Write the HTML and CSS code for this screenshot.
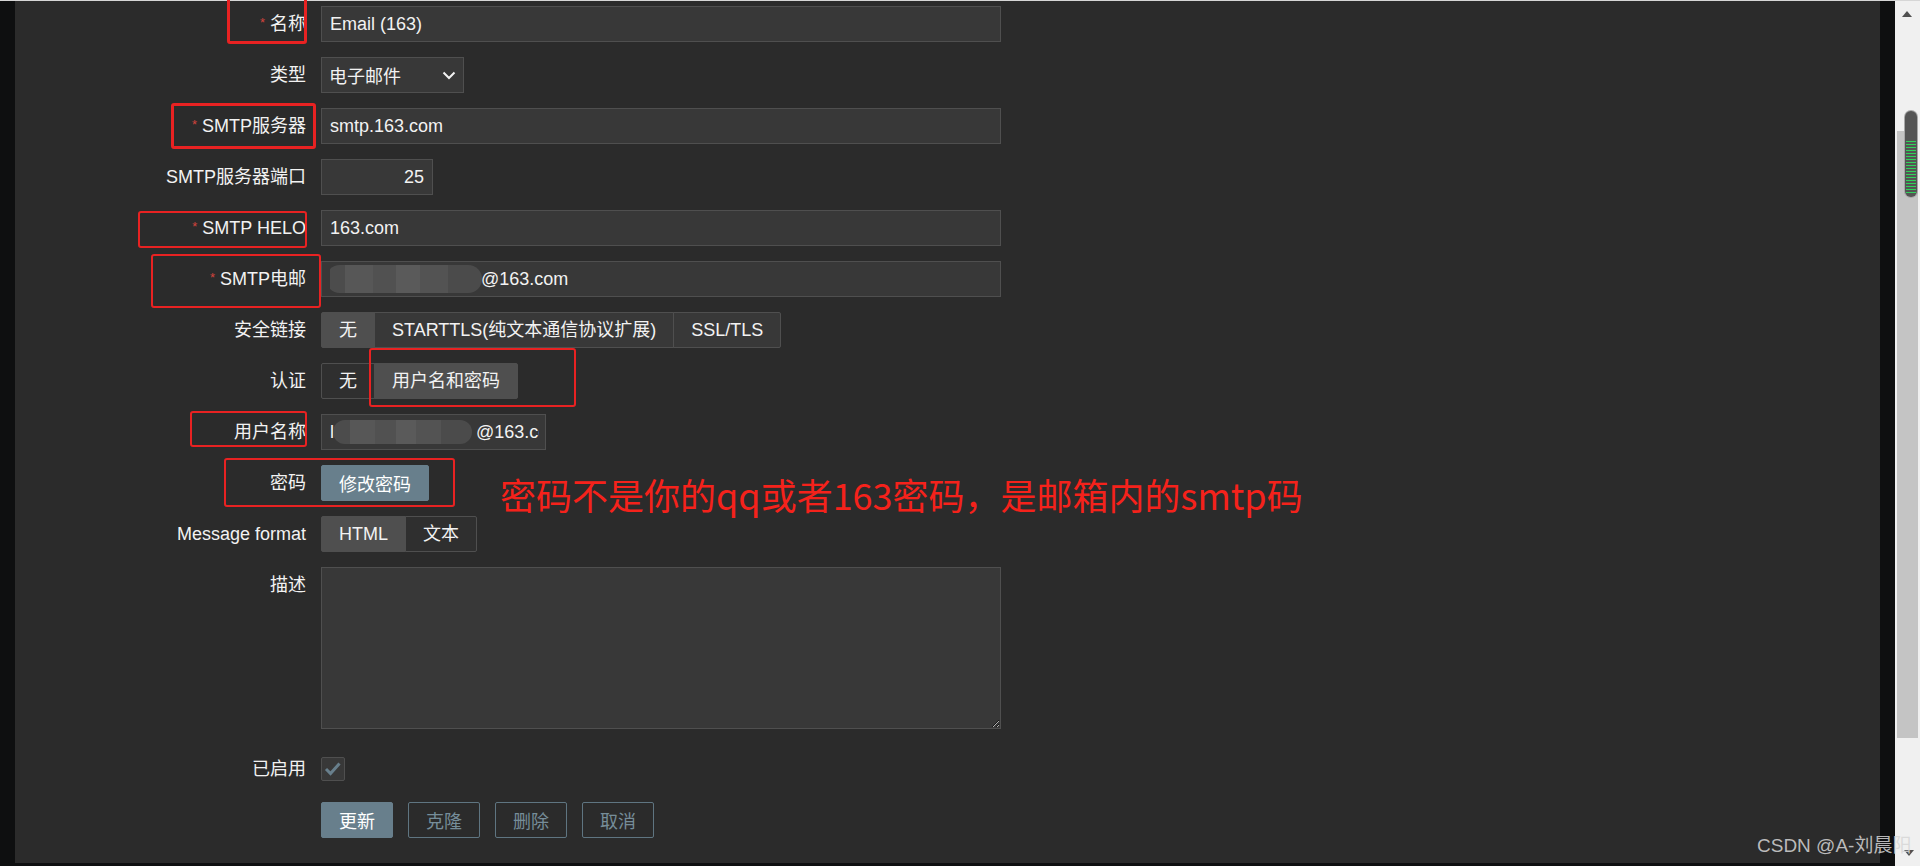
FILE: index.html
```html
<!DOCTYPE html>
<html lang="zh-CN">
<head>
    <meta charset="UTF-8">
    <meta name="viewport" content="width=device-width, initial-scale=1.0">
    <title>媒介类型 - Email (163)</title>
    <link rel="stylesheet" href="styles.css">
</head>
<body>
    <div class="screen">
        <div class="gutter"></div>
        <main class="panel">
            <form class="form-list">
                <div class="row">
                    <label class="label required">名称</label>
                    <input class="textbox wide" type="text" value="Email (163)">
                </div>
                <div class="row">
                    <label class="label">类型</label>
                    <div class="select">
                        <span>电子邮件</span>
                        <svg width="14" height="9" viewBox="0 0 14 9"><polyline points="1.5,1.5 7,7 12.5,1.5" fill="none" stroke="#f2f2f2" stroke-width="2"/></svg>
                    </div>
                </div>
                <div class="row">
                    <label class="label required">SMTP服务器</label>
                    <input class="textbox wide" type="text" value="smtp.163.com">
                </div>
                <div class="row">
                    <label class="label">SMTP服务器端口</label>
                    <input class="textbox short" type="text" value="25">
                </div>
                <div class="row">
                    <label class="label required">SMTP HELO</label>
                    <input class="textbox wide" type="text" value="163.com">
                </div>
                <div class="row">
                    <label class="label required">SMTP电邮</label>
                    <div class="textbox wide">
                        <div class="textbox-clip">
                            <span class="masked mask-mail"></span><span>@163.com</span>
                        </div>
                    </div>
                </div>
                <div class="row">
                    <label class="label">安全链接</label>
                    <div class="segmented">
                        <span class="seg on">无</span>
                        <span class="seg">STARTTLS(纯文本通信协议扩展)</span>
                        <span class="seg">SSL/TLS</span>
                    </div>
                </div>
                <div class="row">
                    <label class="label">认证</label>
                    <div class="segmented">
                        <span class="seg dim">无</span>
                        <span class="seg on">用户名和密码</span>
                    </div>
                </div>
                <div class="row">
                    <label class="label">用户名称</label>
                    <div class="textbox medium">
                        <div class="textbox-clip">
                            <span>l</span><span class="masked mask-user"></span><span>@163.com</span>
                        </div>
                    </div>
                </div>
                <div class="row">
                    <label class="label">密码</label>
                    <button class="btn btn-primary" type="button">修改密码</button>
                </div>
                <div class="row">
                    <label class="label">Message format</label>
                    <div class="segmented">
                        <span class="seg on">HTML</span>
                        <span class="seg dim">文本</span>
                    </div>
                </div>
                <div class="row row-textarea">
                    <label class="label">描述</label>
                    <textarea class="textarea"></textarea>
                </div>
                <div class="row">
                    <label class="label">已启用</label>
                    <span class="checkbox">
                        <svg width="24" height="24" viewBox="0 0 24 24"><polyline points="5,12 9.5,16.5 18.5,6.5" fill="none" stroke="#687f8c" stroke-width="3"/></svg>
                    </span>
                </div>
                <div class="row">
                    <span></span>
                    <div class="actions">
                        <button class="btn btn-primary" type="button">更新</button>
                        <button class="btn" type="button">克隆</button>
                        <button class="btn" type="button">删除</button>
                        <button class="btn" type="button">取消</button>
                    </div>
                </div>
            </form>

            <p class="note">密码不是你的qq或者163密码，是邮箱内的smtp码</p>

            <div class="mark mark-thick mark-name"></div>
            <div class="mark mark-thick mark-server"></div>
            <div class="mark mark-helo"></div>
            <div class="mark mark-mail"></div>
            <div class="mark mark-auth"></div>
            <div class="mark mark-user"></div>
            <div class="mark mark-pass"></div>
        </main>
        <div class="gutter"></div>
        <div class="scrollbar">
            <span class="arrow-up"></span>
            <div class="track"></div>
            <div class="thumb"></div>
            <span class="arrow-down"></span>
        </div>
    </div>
    <div class="watermark">CSDN @A-刘晨阳</div>
</body>
</html>
```

FILE: styles.css
```css
* {
    box-sizing: border-box;
}
body {
    margin: 0;
    background: #0e0f10;
    font-family: "Liberation Sans", Arial, "Noto Sans CJK SC", sans-serif;
    font-size: 18px;
    color: #f2f2f2;
    overflow: hidden;
}
.screen {
    display: flex;
    height: 866px;
    border-top: 1px solid #d6d6d6;
}
.gutter {
    width: 15px;
    flex-shrink: 0;
    background: #0e0f10;
}
.panel {
    flex: 1;
    position: relative;
    background: #2b2b2b;
    margin-bottom: 3px;
}
.form-list {
    display: flex;
    flex-direction: column;
    gap: 15px;
    margin: 0;
    padding-top: 5px;
}
.row {
    display: grid;
    grid-template-columns: 291px auto;
    grid-template-rows: auto;
    column-gap: 15px;
    align-items: start;
    justify-items: start;
}
.row-textarea {
    margin-bottom: 7px;
}
.label {
    justify-self: end;
    height: 36px;
    line-height: 36px;
    white-space: nowrap;
}
.required::before {
    content: "*";
    position: relative;
    top: -3px;
    color: #d1433d;
    font-size: 13px;
    line-height: 1;
    margin-right: 5px;
}
.textbox {
    height: 36px;
    margin: 0;
    padding: 0 8px;
    background: #383838;
    border: 1px solid #4f4f4f;
    border-radius: 0;
    color: #f2f2f2;
    font: inherit;
    outline: none;
}
div.textbox {
    display: flex;
    align-items: center;
    padding-right: 6px;
}
.textbox-clip {
    display: flex;
    align-items: center;
    width: 100%;
    overflow: hidden;
    white-space: nowrap;
}
.wide {
    width: 680px;
}
.short {
    width: 112px;
    text-align: right;
}
.medium {
    width: 225px;
}
.masked {
    display: inline-block;
    flex-shrink: 0;
    height: 28px;
    border-radius: 14px;
    background: linear-gradient(90deg, #4c4c4c 0 12%, #575757 12% 30%, #515151 30% 45%, #5a5a5a 45% 60%, #535353 60% 78%, #4b4b4b 78% 100%);
}
.mask-mail {
    width: 156px;
    margin-left: -4px;
    margin-right: -1px;
}
.mask-user {
    width: 139px;
    height: 24px;
    margin-left: -1px;
    margin-right: 4px;
}
.select {
    width: 143px;
    height: 36px;
    padding: 0 7px;
    display: flex;
    align-items: center;
    justify-content: space-between;
    background: #383838;
    border: 1px solid #4f4f4f;
}
.segmented {
    display: flex;
    height: 36px;
}
.seg {
    height: 36px;
    line-height: 34px;
    padding: 0 17px;
    background: #383838;
    border: 1px solid #4f4f4f;
    white-space: nowrap;
}
.seg + .seg {
    margin-left: -1px;
}
.seg:first-child {
    border-radius: 2px 0 0 2px;
}
.seg:last-child {
    border-radius: 0 2px 2px 0;
}
.seg.dim {
    background: #2f2f2f;
}
.seg.on {
    background: #4f4f4f;
}
.btn {
    height: 36px;
    margin: 0;
    padding: 0 17px;
    background: transparent;
    border: 1px solid #5f7581;
    border-radius: 2px;
    color: #768d99;
    font: inherit;
    white-space: nowrap;
}
.btn-primary {
    background: #687f8c;
    border-color: #687f8c;
    color: #ffffff;
}
.actions {
    display: flex;
    gap: 15px;
}
.textarea {
    display: block;
    width: 680px;
    height: 162px;
    margin: 0;
    background: #383838;
    border: 1px solid #4f4f4f;
    color: #f2f2f2;
    font: inherit;
    outline: none;
}
.checkbox {
    width: 24px;
    height: 24px;
    align-self: center;
    display: flex;
    align-items: center;
    justify-content: center;
    background: #383838;
    border: 1px solid #4f4f4f;
    border-radius: 2px;
}
.checkbox svg {
    flex-shrink: 0;
}
.note {
    position: absolute;
    left: 485px;
    top: 475px;
    margin: 0;
    font-family: "Noto Sans CJK SC", sans-serif;
    font-size: 36px;
    line-height: 36px;
    color: #f5221b;
    white-space: nowrap;
}
.mark {
    position: absolute;
    border: 2px solid #e82222;
    border-radius: 3px;
}
.mark-thick {
    border-width: 3px;
}
.mark-name {
    left: 212px;
    top: -6px;
    width: 80px;
    height: 49px;
}
.mark-server {
    left: 156px;
    top: 102px;
    width: 145px;
    height: 46px;
}
.mark-helo {
    left: 123px;
    top: 210px;
    width: 169px;
    height: 37px;
}
.mark-mail {
    left: 136px;
    top: 253px;
    width: 170px;
    height: 54px;
}
.mark-auth {
    left: 354px;
    top: 347px;
    width: 207px;
    height: 59px;
}
.mark-user {
    left: 175px;
    top: 410px;
    width: 117px;
    height: 36px;
}
.mark-pass {
    left: 209px;
    top: 457px;
    width: 231px;
    height: 49px;
}
.scrollbar {
    width: 25px;
    flex-shrink: 0;
    position: relative;
    background: #f0f0f0;
}
.arrow-up {
    position: absolute;
    left: 7px;
    top: 10px;
    border-left: 5.5px solid transparent;
    border-right: 5.5px solid transparent;
    border-bottom: 6px solid #505050;
}
.arrow-down {
    position: absolute;
    left: 9px;
    top: 849px;
    border-left: 5px solid transparent;
    border-right: 5px solid transparent;
    border-top: 6px solid #505050;
}
.track {
    position: absolute;
    left: 2px;
    top: 130px;
    width: 21px;
    height: 607px;
    background: #c4c4c4;
}
.thumb {
    position: absolute;
    left: 10px;
    top: 110px;
    width: 12px;
    height: 86px;
    border-radius: 6px;
    background: #545454;
    box-shadow: 0 0 0 1px #a8a8a8;
}
.thumb::after {
    content: "";
    position: absolute;
    left: 1px;
    right: 1px;
    top: 30px;
    bottom: 3px;
    background: repeating-linear-gradient(#2fd35a 0 1px, transparent 1px 3px);
}
.watermark {
    position: absolute;
    left: 1757px;
    top: 836px;
    font-size: 19px;
    line-height: 19px;
    color: rgba(214, 214, 214, 0.85);
    white-space: nowrap;
}
```
